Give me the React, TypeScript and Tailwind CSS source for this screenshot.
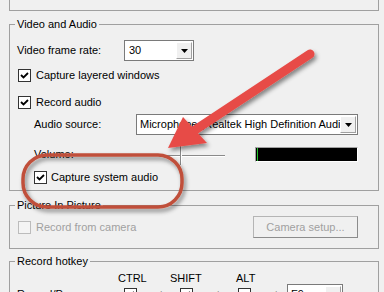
import React from "react";

const Check = ({ on = true, disabled = false }: { on?: boolean; disabled?: boolean }) => (
  <span
    className={
      disabled
        ? "flex h-[13px] w-[13px] shrink-0 items-center justify-center border border-[#bcbcbc] bg-[#f4f4f4]"
        : "flex h-[13px] w-[13px] shrink-0 items-center justify-center border border-[#333] bg-white"
    }
  >
    {on && (
      <svg width="11" height="11" viewBox="0 0 11 11">
        <path d="M2 5 L4.5 7.5 L9 3" fill="none" stroke="#000" strokeWidth="1.8" />
      </svg>
    )}
  </span>
);

const DropButton = () => (
  <span className="flex h-full w-[16px] items-center justify-center border border-t-white border-l-white border-r-[#a0a0a0] border-b-[#a0a0a0] bg-[#f0f0f0]">
    <svg width="7" height="4" viewBox="0 0 7 4">
      <path d="M0 0 H7 L3.5 4 Z" fill="#000" />
    </svg>
  </span>
);

const App = () => {
  return (
    <div className="relative h-[292px] w-[384px] overflow-hidden bg-[#f0f0f0] font-['Liberation_Sans',Arial,sans-serif] text-[11px] text-black">
      {/* tail of the group above */}
      <div className="ml-[9px] h-[11px] w-[370px] border-x border-b border-[#a0a0a0]" />

      {/* Video and Audio */}
      <fieldset className="ml-[9px] mt-[6px] w-[370px] border border-[#a0a0a0] pb-[6px] pl-[7px] pr-[20px]">
        <legend className="-ml-[2px] px-[2px] leading-[15px]">Video and Audio</legend>

        <div className="mt-[8px] flex h-[21px] items-center">
          <span className="w-[107px]">Video frame rate:</span>
          <div className="flex h-[21px] w-[70px] border border-[#7a7a7a] bg-white p-[1px]">
            <span className="flex-1 pl-[3px] leading-[17px]">30</span>
            <DropButton />
          </div>
        </div>

        <div className="mt-[7px] flex h-[14px] items-center pl-[1px]">
          <Check />
          <span className="ml-[5px]">Capture layered windows</span>
        </div>

        <div className="mt-[13px] flex h-[14px] items-center pl-[1px]">
          <Check />
          <span className="ml-[5px]">Record audio</span>
        </div>

        <div className="mt-[5px] flex h-[21px] items-center pl-[17px]">
          <span className="w-[102px]">Audio source:</span>
          <div className="flex h-[21px] w-[222px] border border-[#7a7a7a] bg-white p-[1px]">
            <span className="flex-1 overflow-hidden whitespace-nowrap pl-[2px] leading-[17px]">
              Microphone (Realtek High Definition Audio)
            </span>
            <DropButton />
          </div>
        </div>

        <div className="mt-[8px] flex h-[22px] items-center pl-[17px]">
          <span className="w-[98px]">Volume:</span>
          <div className="relative h-[22px] w-[93px]">
            <div className="absolute left-0 right-0 top-[12px] h-[2px] border-t border-b border-t-[#8a8a8a] border-b-white" />
            <div className="absolute left-[48px] top-0 h-[22px] w-[2px] border-l border-r border-l-[#8a8a8a] border-r-white" />
          </div>
          <div className="ml-[30px] flex h-[15px] w-[103px] border border-t-[#a0a0a0] border-l-[#a0a0a0] border-r-white border-b-white bg-black pl-[1px]">
            <span className="h-full w-[1px] bg-[#22c02a]" />
          </div>
        </div>

        <div className="mt-[5px] flex h-[14px] items-center pl-[17px]">
          <Check />
          <span className="ml-[4px]">Capture system audio</span>
        </div>
      </fieldset>

      {/* Picture In Picture */}
      <fieldset className="ml-[9px] mt-[7px] w-[370px] border border-[#a0a0a0] pb-[10px] pl-[7px] pr-[20px]">
        <legend className="-ml-[2px] px-[2px] leading-[15px]">Picture In Picture</legend>
        <div className="mt-[3px] flex h-[22px] items-center pl-[1px] text-[#a0a0a0]">
          <Check on={false} disabled />
          <span className="ml-[5px]">Record from camera</span>
          <span className="ml-auto flex h-[22px] w-[105px] items-center justify-center border border-[#b5b5b5] border-r-[#8c8c8c] border-b-[#8c8c8c] bg-[#f0f0f0]">
            Camera setup...
          </span>
        </div>
      </fieldset>

      {/* Record hotkey */}
      <fieldset className="ml-[9px] mt-[5px] w-[370px] border border-[#a0a0a0] pb-[8px] pl-[7px] pr-[20px]">
        <legend className="-ml-[2px] px-[2px] leading-[15px]">Record hotkey</legend>
        <div className="mt-[2px] flex h-[14px] items-center">
          <span className="w-[101px]" />
          <span className="w-[52px]">CTRL</span>
          <span className="w-[66px]">SHIFT</span>
          <span>ALT</span>
        </div>
        <div className="-mt-[1px] flex h-[21px] items-center">
          <span className="w-[107px]">Record/Pause:</span>
          <Check />
          <span className="ml-[21px] w-[7px]">+</span>
          <span className="ml-[15px]">
            <Check />
          </span>
          <span className="ml-[22px] w-[7px]">+</span>
          <span className="ml-[16px]">
            <Check on={false} />
          </span>
          <span className="ml-[22px] w-[7px]">+</span>
          <div className="ml-[7px] flex h-[21px] w-[56px] border border-[#7a7a7a] bg-white p-[1px]">
            <span className="flex-1 pl-[2px] leading-[17px]">F9</span>
            <DropButton />
          </div>
        </div>
      </fieldset>

      {/* annotation overlay */}
      <svg className="pointer-events-none absolute inset-0" width="384" height="292" viewBox="0 0 384 292">
        <defs>
          <filter id="sh" x="-20%" y="-20%" width="140%" height="140%">
            <feDropShadow dx="2" dy="3" stdDeviation="2" floodColor="#000" floodOpacity="0.45" />
          </filter>
        </defs>
        <rect x="23" y="155" width="159" height="52" rx="24" fill="none" stroke="#c0503a" strokeWidth="3.5" filter="url(#sh)" />
        <g filter="url(#sh)">
          <line x1="310" y1="54" x2="192" y2="132" stroke="#e74c47" strokeWidth="9" strokeLinecap="round" />
          <polygon points="168,148 183,117 207,143" fill="#e74c47" />
        </g>
      </svg>
    </div>
  );
};

export default App;
